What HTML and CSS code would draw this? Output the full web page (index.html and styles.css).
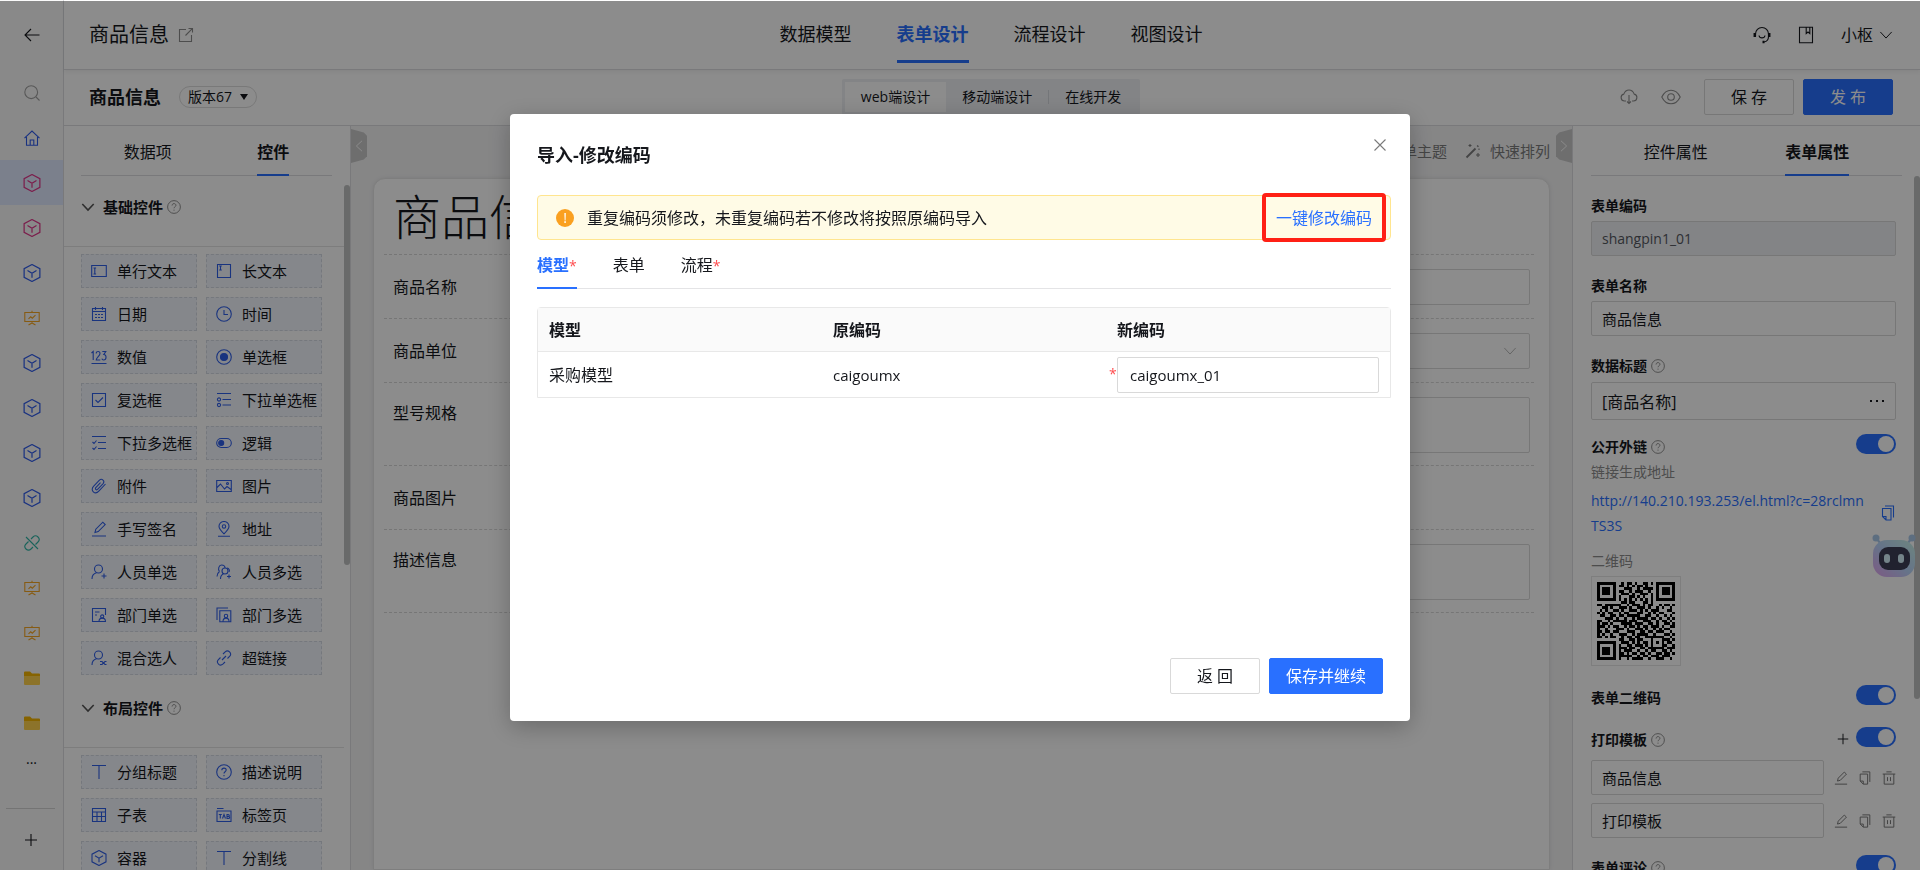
FILE: index.html
```
<!DOCTYPE html>
<html lang="zh-CN">
<head>
    <meta charset="UTF-8">
    <meta name="viewport" content="width=device-width, initial-scale=1.0">
    <title>商品信息 - 表单设计</title>
    <link rel="stylesheet" href="styles.css">
</head>
<body>
    <!-- Icon sprite -->
    <svg class="sprite" aria-hidden="true">
        <symbol id="i-back" viewBox="0 0 16 16"><path d="M15.5 8H1M7 2 1 8l6 6"/></symbol>
        <symbol id="i-search" viewBox="0 0 16 16"><circle cx="7.2" cy="7.2" r="6.4"/><path d="m12 12 3.5 3.5"/></symbol>
        <symbol id="i-home" viewBox="0 0 16 16"><path d="M.5 8.2 8 1l7.500 7.200M2.500 7v8.200h11V7M6.200 15v-5h3.600v5"/></symbol>
        <symbol id="i-cube" viewBox="0 0 16 16"><path d="M8 .5 15 4.200v7.600L8 15.500 1 11.800V4.200zM4 5.800l4 2.400 4-2.400M8 8.200v4"/></symbol>
        <symbol id="i-board" viewBox="0 0 16 16"><path d="M.8 2.500h14.400v9H.8zM8 .8v1.500M8 11.500v2M4.500 15 8 13l3.500 2M4.500 8.800l2.200-2 1.600 1.400 3.200-3"/></symbol>
        <symbol id="i-unlink" viewBox="0 0 16 16"><path d="m2 2 12 12M7 4l2-2a3.500 3.500 0 0 1 5 5l-2.500 2.500M9 12l-2 2a3.500 3.500 0 0 1-5-5l2.500-2.500"/></symbol>
        <symbol id="i-folder" viewBox="0 0 18 16"><path fill="#f5b400" stroke="none" d="M1 2.500Q1 1.500 2 1.500h5l2 2h7q1 0 1 1V8H1z"/><path fill="#ffd24d" stroke="none" d="M1 6h16v8q0 1-1 1H2q-1 0-1-1z"/></symbol>
        <symbol id="i-plus" viewBox="0 0 16 16"><path d="M8 2v12M2 8h12"/></symbol>
        <symbol id="i-share" viewBox="0 0 16 16"><path d="M8 2.500H1.500v12h12V8M10.500 1.500h4v4M14.300 1.700 7.500 8.500"/></symbol>
        <symbol id="i-down" viewBox="0 0 16 16"><path d="m1.500 4.500 6.500 7 6.500-7"/></symbol>
        <symbol id="i-left" viewBox="0 0 16 16"><path d="M11.500 2 5 8l6.500 6"/></symbol>
        <symbol id="i-right" viewBox="0 0 16 16"><path d="M4.500 2 11 8l-6.500 6"/></symbol>
        <symbol id="i-help" viewBox="0 0 16 16"><circle cx="8" cy="8" r="7.300"/><path d="M5.800 6.300c0-3 4.400-2.800 4.400-.2 0 1.600-2.200 1.700-2.200 3.300M8 11v1.200"/></symbol>
        <symbol id="i-headset" viewBox="0 0 18 18"><path d="M2.500 10V8a6.500 6.500 0 0 1 13 0v2.500c0 3-1.500 5-4.500 5.500M6 9.500c.5 3.200 5.500 3.200 6 0"/><path stroke-width="2.500" d="M1.800 7v4M16.200 7v4M9.500 16h2"/></symbol>
        <symbol id="i-book" viewBox="0 0 16 18"><path d="M1.500 1.200h13v15.600h-13zM8.200 1.500v6l1.800-1.500 1.800 1.500v-6"/></symbol>
        <symbol id="i-cloud" viewBox="0 0 18 16"><path d="M6 12H4.500a3.500 3.500 0 0 1-.7-6.900C4.800 2.500 6.800 1 9 1s4.200 1.500 5.200 4.100a3.500 3.500 0 0 1-.7 6.900H12M9 6v8.500M7 12.500l2 2 2-2"/></symbol>
        <symbol id="i-eye" viewBox="0 0 20 16"><path d="M.8 8C3 3.500 6 1.200 10 1.200S17 3.500 19.200 8C17 12.500 14 14.800 10 14.800S3 12.500.8 8z"/><circle cx="10" cy="8" r="3.300"/></symbol>
        <symbol id="i-wand" viewBox="0 0 16 16"><path stroke-width="1.800" d="m1.500 14.500 9-9M12.300 3.700l1-1"/><path d="M5 1v3M3.500 2.500h3M13 10v4M11 12h4M14 5.500v1.500"/></symbol>
        <symbol id="i-text" viewBox="0 0 16 16"><path d="M.7 2.500h14.600v11H.7zM2.500 5h2.600M2.500 11h2.600M3.800 5v6"/></symbol>
        <symbol id="i-textarea" viewBox="0 0 16 16"><path d="M1.500 1.500h13v13h-13zM3.200 3h2.600M3.200 7h2.600M4.500 3v4"/></symbol>
        <symbol id="i-date" viewBox="0 0 16 16"><path d="M1.500 2.500h13v12h-13zM1.500 5.500h13M4.500 1v3M11.500 1v3M4 8.500h2M7 8.500h2M10 8.500h2M4 11.500h2M7 11.500h2M10 11.500h2"/></symbol>
        <symbol id="i-time" viewBox="0 0 16 16"><circle cx="8" cy="8" r="7.300"/><path d="M8 4v4.500h4"/></symbol>
        <symbol id="i-number" viewBox="0 0 16 16"><path d="M.5 14.500h15M.5 4 2.200 2.500v8.500M5.200 4.500c0-2.700 3.800-2.700 3.800 0C9 6.800 5.200 9 5.200 11H9.300M11.300 2.500h3.500l-2 3c3 0 3 5.500-.2 5.500q-1.500 0-1.700-1.300"/></symbol>
        <symbol id="i-radio" viewBox="0 0 16 16"><circle cx="8" cy="8" r="7.300"/><circle cx="8" cy="8" r="3.500" fill="currentColor"/></symbol>
        <symbol id="i-check" viewBox="0 0 16 16"><path d="M1.500 1.500h13v13h-13zM4.500 8l2.500 2.500L12 5.500"/></symbol>
        <symbol id="i-select" viewBox="0 0 16 16"><path d="M1 1.500h14M6.500 7.500H15M6.500 13H15"/><circle cx="3" cy="7.500" r="1.600"/><circle cx="3" cy="13" r="1.600"/></symbol>
        <symbol id="i-multi" viewBox="0 0 16 16"><path d="M1 1.500h14M7 7.500h8M7 13.500h8M1.500 7l1.500 1.500 2.500-3M1.500 13 3 14.500l2.500-3"/></symbol>
        <symbol id="i-switch" viewBox="0 0 16 16"><rect x=".7" y="3.500" width="14.600" height="9" rx="4.500"/><circle cx="5.200" cy="8" r="2.500" fill="currentColor"/></symbol>
        <symbol id="i-clip" viewBox="0 0 16 16"><path d="m14.500 6-6.700 7.200c-3.800 4-9-.8-5.300-4.800l5.700-6c2.700-2.700 6.200.6 3.700 3.400L6.800 11.200c-1.400 1.500-3.200-.3-2-1.600l4.700-5"/></symbol>
        <symbol id="i-image" viewBox="0 0 16 16"><path d="M.7 2.500h14.600v11H.7zM1 9.500l3.500-3.500 4 5 2.500-2.500 4 3"/><circle cx="11.500" cy="5.500" r="1"/></symbol>
        <symbol id="i-pen" viewBox="0 0 16 16"><path d="M1 15h14M4 11.500l.8-3.300L11.800 1.200l2.400 2.400-7 7z"/></symbol>
        <symbol id="i-pin" viewBox="0 0 16 16"><path d="M8 12.800C4.800 9.800 3 7.500 3 5.300a5 4.800 0 0 1 10 0c0 2.200-1.800 4.500-5 7.500zM2 15.300h12"/><circle cx="8" cy="5.500" r="1.700"/></symbol>
        <symbol id="i-user" viewBox="0 0 16 16"><circle cx="7.500" cy="5" r="4"/><path d="M1 15c0-3.500 2-5.500 4.500-6.200M13 9.500v5M10.500 12h5"/></symbol>
        <symbol id="i-users" viewBox="0 0 16 16"><path d="M3.500 7.500C1.500 5 3 1 5.500 1S9 2.500 9 4M1 12.500c0-2.500 1-4 2.500-5"/><circle cx="9" cy="7" r="3"/><path d="M4.500 15c0-2.500 1-4.300 3-5.200M13 10.500v4M11 12.500h4M11 4c2 .3 3 2.200 2 4"/></symbol>
        <symbol id="i-dept" viewBox="0 0 16 16"><path d="M14.500 8V1.500h-13v13h6M4 5h4.500M4 8h2M8 14.500c0-4.500 6.500-4.500 6.500 0z"/><circle cx="11.200" cy="9.500" r="1.600"/></symbol>
        <symbol id="i-depts" viewBox="0 0 16 16"><path d="M1 13V1h11M3.800 3.800h11v11h-11zM7 14.500c0-4.500 6-4.500 6 0"/><circle cx="10" cy="9" r="1.700"/></symbol>
        <symbol id="i-mix" viewBox="0 0 16 16"><circle cx="7.500" cy="5" r="4"/><path d="M1 15c0-3.500 2-5.500 4.500-6.200M9 11.500h2l3 3h1.500M9 14.500h2l3-3h1.500"/></symbol>
        <symbol id="i-link" viewBox="0 0 16 16"><path d="m7 4 2.200-2.200c3-2.600 7 1.600 4.600 4.400L11.500 8.500M9 12l-2.200 2.200c-3 2.600-7-1.600-4.600-4.400L4.500 7.500M6 10l4-4"/></symbol>
        <symbol id="i-title" viewBox="0 0 16 16"><path d="M1 1.500h14M8 1.500V15"/></symbol>
        <symbol id="i-table" viewBox="0 0 16 16"><path d="M1.500 1.500h13v13h-13zM1.500 5h13M1.500 9.500h13M6 5v9.500M10.500 5v9.500"/></symbol>
        <symbol id="i-tab" viewBox="0 0 16 16"><path d="M1 1.500h6.500M1 4h14v10.500H1zM2.800 7.500h3M4.300 7.500v4M6.500 11.500 8 7.500l1.500 4M11 7.500v4h1.500c1.500 0 1.500-2 0-2H11h1.300c1.300 0 1.300-2 0-2z"/></symbol>
        <symbol id="i-copy" viewBox="0 0 16 16"><path d="M2.500 3.500h8.500v11.500H6L2.500 11.500zM2.500 11.500H6V15M5 1h8.500v11.500"/></symbol>
        <symbol id="i-trash" viewBox="0 0 16 16"><path d="M.8 3.500h14.400M5 1h6M2.500 3.500V15h11V3.500M6.300 7v4.500M9.700 7v4.500"/></symbol>
        <symbol id="i-close" viewBox="0 0 16 16"><path d="m2.500 2.500 11 11M13.500 2.500l-11 11"/></symbol>
    </svg>

    <div class="app">
        <nav class="sidebar">
            <a class="side-back" href="#" aria-label="返回"><svg class="icon"><use href="#i-back"/></svg></a>
            <a class="side-item muted" href="#" aria-label="搜索"><svg class="icon"><use href="#i-search"/></svg></a>
            <a class="side-item blue" href="#" aria-label="首页"><svg class="icon"><use href="#i-home"/></svg></a>
            <a class="side-item pink active" href="#" aria-label="表单"><svg class="icon icon-18"><use href="#i-cube"/></svg></a>
            <a class="side-item pink" href="#" aria-label="表单"><svg class="icon icon-18"><use href="#i-cube"/></svg></a>
            <a class="side-item blue" href="#" aria-label="表单"><svg class="icon icon-18"><use href="#i-cube"/></svg></a>
            <a class="side-item orange" href="#" aria-label="看板"><svg class="icon"><use href="#i-board"/></svg></a>
            <a class="side-item blue" href="#" aria-label="表单"><svg class="icon icon-18"><use href="#i-cube"/></svg></a>
            <a class="side-item blue" href="#" aria-label="表单"><svg class="icon icon-18"><use href="#i-cube"/></svg></a>
            <a class="side-item blue" href="#" aria-label="表单"><svg class="icon icon-18"><use href="#i-cube"/></svg></a>
            <a class="side-item blue" href="#" aria-label="表单"><svg class="icon icon-18"><use href="#i-cube"/></svg></a>
            <a class="side-item teal" href="#" aria-label="链接"><svg class="icon"><use href="#i-unlink"/></svg></a>
            <a class="side-item orange" href="#" aria-label="看板"><svg class="icon"><use href="#i-board"/></svg></a>
            <a class="side-item orange" href="#" aria-label="看板"><svg class="icon"><use href="#i-board"/></svg></a>
            <a class="side-item" href="#" aria-label="文件夹"><svg class="icon icon-18"><use href="#i-folder"/></svg></a>
            <a class="side-item" href="#" aria-label="文件夹"><svg class="icon icon-18"><use href="#i-folder"/></svg></a>
            <button class="side-more" type="button">···</button>
            <button class="side-add" type="button" aria-label="新增"><svg class="icon"><use href="#i-plus"/></svg></button>
        </nav>

        <div class="main">
            <header class="topbar">
                <div class="topbar-title">商品信息 <svg class="icon gray"><use href="#i-share"/></svg></div>
                <nav class="topnav">
                    <a href="#">数据模型</a>
                    <a class="active" href="#">表单设计</a>
                    <a href="#">流程设计</a>
                    <a href="#">视图设计</a>
                </nav>
                <div class="topbar-right">
                    <svg class="icon icon-18"><use href="#i-headset"/></svg>
                    <svg class="icon icon-18"><use href="#i-book"/></svg>
                    <button class="user" type="button">小枢 <svg class="icon icon-14"><use href="#i-down"/></svg></button>
                </div>
            </header>

            <div class="subbar">
                <div class="subbar-left">
                    <h1>商品信息</h1>
                    <button class="version" type="button">版本67 <span class="caret"></span></button>
                </div>
                <div class="segment">
                    <button class="active" type="button">web端设计</button>
                    <button type="button">移动端设计</button>
                    <button class="divided" type="button">在线开发</button>
                </div>
                <div class="subbar-right">
                    <svg class="icon icon-18 gray"><use href="#i-cloud"/></svg>
                    <svg class="icon icon-20 gray"><use href="#i-eye"/></svg>
                    <button class="btn" type="button">保 存</button>
                    <button class="btn primary" type="button">发 布</button>
                </div>
            </div>

            <div class="workspace">
                <aside class="widgets">
                    <div class="panel-tabs">
                        <a href="#">数据项</a>
                        <a class="active" href="#">控件</a>
                    </div>
                    <div class="scroll-thumb left-thumb"></div>
                    <h2 class="group-title"><svg class="icon icon-14"><use href="#i-down"/></svg>基础控件<svg class="icon icon-14 gray help"><use href="#i-help"/></svg></h2>
                    <div class="widget-grid">
                        <button type="button"><svg class="icon"><use href="#i-text"/></svg>单行文本</button>
                        <button type="button"><svg class="icon"><use href="#i-textarea"/></svg>长文本</button>
                        <button type="button"><svg class="icon"><use href="#i-date"/></svg>日期</button>
                        <button type="button"><svg class="icon"><use href="#i-time"/></svg>时间</button>
                        <button type="button"><svg class="icon"><use href="#i-number"/></svg>数值</button>
                        <button type="button"><svg class="icon"><use href="#i-radio"/></svg>单选框</button>
                        <button type="button"><svg class="icon"><use href="#i-check"/></svg>复选框</button>
                        <button type="button"><svg class="icon"><use href="#i-select"/></svg>下拉单选框</button>
                        <button type="button"><svg class="icon"><use href="#i-multi"/></svg>下拉多选框</button>
                        <button type="button"><svg class="icon"><use href="#i-switch"/></svg>逻辑</button>
                        <button type="button"><svg class="icon"><use href="#i-clip"/></svg>附件</button>
                        <button type="button"><svg class="icon"><use href="#i-image"/></svg>图片</button>
                        <button type="button"><svg class="icon"><use href="#i-pen"/></svg>手写签名</button>
                        <button type="button"><svg class="icon"><use href="#i-pin"/></svg>地址</button>
                        <button type="button"><svg class="icon"><use href="#i-user"/></svg>人员单选</button>
                        <button type="button"><svg class="icon"><use href="#i-users"/></svg>人员多选</button>
                        <button type="button"><svg class="icon"><use href="#i-dept"/></svg>部门单选</button>
                        <button type="button"><svg class="icon"><use href="#i-depts"/></svg>部门多选</button>
                        <button type="button"><svg class="icon"><use href="#i-mix"/></svg>混合选人</button>
                        <button type="button"><svg class="icon"><use href="#i-link"/></svg>超链接</button>
                    </div>
                    <h2 class="group-title"><svg class="icon icon-14"><use href="#i-down"/></svg>布局控件<svg class="icon icon-14 gray help"><use href="#i-help"/></svg></h2>
                    <div class="widget-grid">
                        <button type="button"><svg class="icon"><use href="#i-title"/></svg>分组标题</button>
                        <button type="button"><svg class="icon"><use href="#i-help"/></svg>描述说明</button>
                        <button type="button"><svg class="icon"><use href="#i-table"/></svg>子表</button>
                        <button type="button"><svg class="icon"><use href="#i-tab"/></svg>标签页</button>
                        <button type="button"><svg class="icon"><use href="#i-cube"/></svg>容器</button>
                        <button type="button"><svg class="icon"><use href="#i-title"/></svg>分割线</button>
                    </div>
                </aside>

                <main class="canvas">
                    <button class="fold fold-left" type="button" aria-label="收起"><svg class="icon icon-14"><use href="#i-left"/></svg></button>
                    <button class="fold fold-right" type="button" aria-label="收起"><svg class="icon icon-14"><use href="#i-right"/></svg></button>
                    <div class="canvas-tools">
                        <span>表单主题</span>
                        <span><svg class="icon"><use href="#i-wand"/></svg>快速排列</span>
                    </div>
                    <div class="form-card">
                        <div class="form-title">商品信息</div>
                        <div class="form-row"><label for="f-name">商品名称</label><input id="f-name" type="text"></div>
                        <div class="form-row">
                            <label for="f-unit">商品单位</label>
                            <select id="f-unit"><option></option></select>
                            <svg class="icon icon-14 select-arrow"><use href="#i-down"/></svg>
                        </div>
                        <div class="form-row tall"><label for="f-spec">型号规格</label><textarea id="f-spec"></textarea></div>
                        <div class="form-row"><span class="row-label">商品图片</span></div>
                        <div class="form-row tall"><label for="f-desc">描述信息</label><textarea id="f-desc"></textarea></div>
                    </div>
                </main>

                <aside class="props">
                    <div class="panel-tabs">
                        <a href="#">控件属性</a>
                        <a class="active" href="#">表单属性</a>
                    </div>
                    <div class="scroll-thumb right-thumb"></div>
                    <div class="field">
                        <label for="p-code">表单编码</label>
                        <input id="p-code" type="text" value="shangpin1_01" disabled>
                    </div>
                    <div class="field">
                        <label for="p-name">表单名称</label>
                        <input id="p-name" type="text" value="商品信息">
                    </div>
                    <div class="field">
                        <label for="p-title">数据标题<svg class="icon icon-14 gray help"><use href="#i-help"/></svg></label>
                        <div class="pick">
                            <input id="p-title" type="text" value="[商品名称]">
                            <button type="button" aria-label="选择">
                                <svg class="icon" viewBox="0 0 16 16"><path stroke-width="2" d="M1 8h2M7 8h2M13 8h2"/></svg>
                            </button>
                        </div>
                    </div>
                    <div class="switch-row link-switch">
                        <label for="s-link">公开外链<svg class="icon icon-14 gray help"><use href="#i-help"/></svg></label>
                        <input id="s-link" class="switch" type="checkbox" role="switch" checked>
                    </div>
                    <p class="hint">链接生成地址</p>
                    <div class="link-row">
                        <a href="#">http://140.210.193.253/el.html?c=28rclmn<br>TS3S</a>
                        <svg class="icon"><use href="#i-copy"/></svg>
                    </div>
                    <p class="hint qr-hint">二维码</p>
                    <div class="qr"><svg id="qr" viewBox="0 0 29 29" shape-rendering="crispEdges"></svg></div>
                    <div class="switch-row">
                        <label for="s-qr">表单二维码</label>
                        <input id="s-qr" class="switch" type="checkbox" role="switch" checked>
                    </div>
                    <div class="switch-row print-switch">
                        <label for="s-print">打印模板<svg class="icon icon-14 gray help"><use href="#i-help"/></svg></label>
                        <button type="button" aria-label="新增模板"><svg class="icon icon-14"><use href="#i-plus"/></svg></button>
                        <input id="s-print" class="switch" type="checkbox" role="switch" checked>
                    </div>
                    <div class="tpl-row">
                        <input type="text" value="商品信息" aria-label="模板名称">
                        <svg class="icon icon-14"><use href="#i-pen"/></svg>
                        <svg class="icon icon-14"><use href="#i-copy"/></svg>
                        <svg class="icon icon-14"><use href="#i-trash"/></svg>
                    </div>
                    <div class="tpl-row">
                        <input type="text" value="打印模板" aria-label="模板名称">
                        <svg class="icon icon-14"><use href="#i-pen"/></svg>
                        <svg class="icon icon-14"><use href="#i-copy"/></svg>
                        <svg class="icon icon-14"><use href="#i-trash"/></svg>
                    </div>
                    <div class="switch-row">
                        <label for="s-comment">表单评论<svg class="icon icon-14 gray help"><use href="#i-help"/></svg></label>
                        <input id="s-comment" class="switch" type="checkbox" role="switch" checked>
                    </div>
                </aside>
            </div>
        </div>
    </div>

    <!-- Assistant robot -->
    <svg class="robot" viewBox="0 0 44 46">
        <defs>
            <linearGradient id="shell" x1="0" y1="1" x2="1" y2="0">
                <stop offset="0" stop-color="#e4a3f0"/>
                <stop offset=".5" stop-color="#b9d4fa"/>
                <stop offset="1" stop-color="#c9f3e6"/>
            </linearGradient>
        </defs>
        <path d="m4 4 5 6M40 4l-5 6" stroke="#a9c8ea" stroke-width="2"/>
        <circle cx="4" cy="4" r="3.500" fill="#a9c8ea"/>
        <circle cx="40" cy="4" r="3.500" fill="#a9c8ea"/>
        <rect x="1" y="6" width="42" height="37" rx="14" fill="url(#shell)"/>
        <rect x="7" y="13" width="31" height="23" rx="9" fill="#3d3f57"/>
        <rect x="12" y="20" width="6" height="9" rx="3" fill="#d3f1fa"/>
        <rect x="26" y="20" width="6" height="9" rx="3" fill="#d3f1fa"/>
    </svg>

    <div class="mask">
        <div class="modal" role="dialog" aria-labelledby="modal-title">
            <header class="modal-head">
                <h2 id="modal-title">导入-修改编码</h2>
                <button type="button" aria-label="关闭"><svg class="icon"><use href="#i-close"/></svg></button>
            </header>
            <div class="modal-body">
                <div class="alert">
                    <span class="alert-icon">!</span>
                    <span class="alert-text">重复编码须修改，未重复编码若不修改将按照原编码导入</span>
                    <button class="fix-all" type="button">一键修改编码</button>
                </div>
                <div class="modal-tabs">
                    <a class="active" href="#">模型<em>*</em></a>
                    <a href="#">表单</a>
                    <a href="#">流程<em>*</em></a>
                </div>
                <table class="code-table">
                    <thead>
                        <tr><th>模型</th><th>原编码</th><th>新编码</th></tr>
                    </thead>
                    <tbody>
                        <tr>
                            <td>采购模型</td>
                            <td class="code">caigoumx</td>
                            <td class="code edit"><em>*</em><input type="text" value="caigoumx_01" aria-label="新编码"></td>
                        </tr>
                    </tbody>
                </table>
            </div>
            <footer class="modal-foot">
                <button class="btn" type="button">返 回</button>
                <button class="btn primary" type="button">保存并继续</button>
            </footer>
        </div>
    </div>

    <script src="script.js"></script>
</body>
</html>
```
FILE: styles.css
```
* {
    box-sizing: border-box;
}

body {
    margin: 0;
    height: 100vh;
    overflow: hidden;
    font-family: "Open Sans", "Noto Sans CJK SC", sans-serif;
    font-size: 16px;
    line-height: 24px;
    color: #15171c;
    background: #fff;
}

a {
    color: inherit;
    text-decoration: none;
}

h1, h2, p {
    margin: 0;
}

em {
    font-style: normal;
    font-size: 14px;
    color: #ff4d4f;
}

button, input, select, textarea {
    font: inherit;
    color: inherit;
}

button {
    padding: 0;
    border: 0;
    background: none;
    cursor: pointer;
}

input[type="text"], select, textarea {
    display: block;
    width: 100%;
    padding: 0 10px;
    border: 1px solid #d9d9d9;
    border-radius: 2px;
    background: #fff;
    outline: none;
    appearance: none;
    resize: none;
}

.sprite {
    position: absolute;
    width: 0;
    height: 0;
}

.icon {
    flex: none;
    width: 16px;
    height: 16px;
    fill: none;
    stroke: currentColor;
    stroke-width: 1.1;
}

.icon-14 {
    width: 14px;
    height: 14px;
}

.icon-18 {
    width: 18px;
    height: 18px;
}

.icon-20 {
    width: 20px;
    height: 18px;
}

.gray {
    color: #8c8c8c;
}

.help {
    margin-left: 4px;
}

.app {
    display: flex;
    height: 100vh;
}

/* Sidebar */
.sidebar {
    display: flex;
    flex-direction: column;
    align-items: stretch;
    width: 64px;
    border-right: 1px solid #dcdde0;
    background: #fafafa;
}

.side-back, .side-item, .side-more, .side-add {
    display: flex;
    justify-content: center;
    align-items: center;
    height: 45px;
}

.side-back {
    height: 70px;
}

.side-item.active {
    background: #e0eaff;
}

.side-more {
    height: 36px;
    font-size: 14px;
}

.side-add {
    height: 62px;
    margin: auto 8px 0 6px;
    border-top: 1px solid #d4d4d4;
}

.muted { color: #a0a0a0; }
.blue { color: #2f5bea; }
.pink { color: #e0358a; }
.orange { color: #f5a623; }
.teal { color: #2fb5a5; }

/* Header rows */
.main {
    flex: 1;
    display: flex;
    flex-direction: column;
    min-width: 0;
}

.topbar, .subbar {
    flex: none;
    display: grid;
    grid-template-columns: 1fr auto 1fr;
    align-items: center;
    padding: 0 27px 0 25px;
    border-bottom: 1px solid #dcdde0;
}

.topbar {
    height: 70px;
    box-shadow: 0 2px 4px rgba(0, 0, 0, 0.06);
}

.subbar {
    height: 56px;
    padding-bottom: 2px;
}

.topbar-title {
    display: flex;
    align-items: center;
    gap: 9px;
    font-size: 20px;
}

.topnav {
    display: flex;
    gap: 45px;
    font-size: 18px;
}

.topnav a {
    padding: 16px 0 14px;
    border-bottom: 3px solid transparent;
}

.topnav .active {
    border-bottom-color: #2970ff;
    font-weight: bold;
    color: #2970ff;
}

.topbar-right, .subbar-right {
    display: flex;
    justify-content: flex-end;
    align-items: center;
}

.topbar-right {
    gap: 26px;
}

.user {
    display: flex;
    align-items: center;
    gap: 6px;
}

.subbar-left {
    display: flex;
    align-items: center;
    gap: 18px;
}

.subbar-left h1 {
    font-size: 18px;
}

.version {
    display: flex;
    align-items: center;
    gap: 8px;
    height: 22px;
    padding: 0 8px;
    border: 1px solid #dcdcdc;
    border-radius: 11px;
    font-size: 14px;
}

.caret {
    border: 4px solid transparent;
    border-top: 6px solid #15171c;
    border-bottom: 0;
}

.segment {
    display: flex;
    align-items: center;
    height: 36px;
    padding: 3px;
    border-radius: 2px;
    background: #eef0f4;
    font-size: 14px;
}

.segment button {
    height: 30px;
    padding: 0 16px;
}

.segment .active {
    background: #fff;
}

.segment .divided {
    height: 14px;
    border-left: 1px solid #d4d7dd;
    line-height: 14px;
}

.subbar-right {
    gap: 9px;
}

.subbar-right .icon {
    margin-right: 14px;
}

.btn {
    min-width: 90px;
    height: 36px;
    padding: 0 16px;
    border: 1px solid #d9d9d9;
    border-radius: 2px;
    background: #fff;
}

.btn.primary {
    border-color: #2970ff;
    background: #2970ff;
    color: #fff;
}

/* Three column workspace */
.workspace {
    flex: 1;
    display: flex;
    min-height: 0;
}

.widgets, .props {
    position: relative;
    flex: none;
    overflow: hidden;
}

.widgets {
    width: 287px;
    border-right: 1px solid #dcdde0;
}

.panel-tabs {
    display: flex;
    justify-content: space-around;
    height: 50px;
    margin: 0 18px 0 17px;
    border-bottom: 1px solid #dcdde0;
}

.panel-tabs a {
    height: 50px;
    padding-top: 14px;
}

.panel-tabs .active {
    border-bottom: 2px solid #2970ff;
    font-weight: bold;
}

.scroll-thumb {
    position: absolute;
    right: 0;
    width: 6px;
    border-radius: 3px;
    background: #c0c2c2;
}

.left-thumb {
    top: 59px;
    height: 380px;
}

.right-thumb {
    top: 50px;
    height: 523px;
}

.group-title {
    display: flex;
    align-items: center;
    height: 71px;
    margin-right: 6px;
    padding: 0 17px 8px;
    border-bottom: 1px solid #e4e4e4;
    font-size: 15px;
}

.group-title .icon:first-child {
    margin-right: 8px;
    color: #555;
    stroke-width: 1.8;
}

.widget-grid {
    display: grid;
    grid-template-columns: 1fr 1fr;
    gap: 9px;
    padding: 7px 28px 2px 17px;
}

.widget-grid button {
    display: flex;
    align-items: center;
    gap: 10px;
    height: 34px;
    padding-left: 9px;
    border: 1px dashed #d6dae3;
    background: #f3f6fd;
    font-size: 15px;
    white-space: nowrap;
}

.widget-grid .icon {
    color: #2f5fe8;
}

.canvas {
    position: relative;
    flex: 1;
    display: flex;
    flex-direction: column;
    min-width: 0;
    padding: 0 22px;
    background: #f4f4f5;
}

.canvas-tools {
    display: flex;
    justify-content: flex-end;
    gap: 18px;
    height: 52px;
    padding-top: 13px;
    font-size: 15px;
    color: #7d7d7d;
}

.canvas-tools span {
    display: flex;
    align-items: center;
    gap: 9px;
    height: 24px;
}

.fold {
    position: absolute;
    top: 3px;
    width: 16px;
    height: 34px;
    background: #c8c8c8;
    color: #fff;
}

.fold .icon {
    display: block;
    margin: auto;
}

.fold-left {
    left: 0;
    clip-path: polygon(0 0, 80% 10%, 100% 20%, 100% 80%, 80% 90%, 0 100%);
}

.fold-right {
    right: 0;
    clip-path: polygon(100% 0, 20% 10%, 0 20%, 0 80%, 20% 90%, 100% 100%);
}

.form-card {
    flex: 1;
    padding: 0 15px 0 10px;
    border: 1px solid #e6e6e6;
    border-radius: 12px 12px 0 0;
    background: #fff;
    box-shadow: 0 0 4px rgba(0, 0, 0, 0.08);
}

.form-title {
    height: 76px;
    padding-left: 9px;
    border-bottom: 1px dashed #d8d8d8;
    font-size: 48px;
    font-weight: 300;
    line-height: 76px;
}

.form-row {
    position: relative;
    display: flex;
    align-items: center;
    height: 64px;
    padding: 0 4px 0 9px;
    border-bottom: 1px dashed #d8d8d8;
}

.form-row label {
    width: 130px;
}

.form-row input, .form-row select {
    flex: 1;
    width: auto;
    height: 36px;
}

.form-row.tall {
    align-items: flex-start;
    height: 83px;
    padding-top: 14px;
}

.tall label {
    padding-top: 4px;
}

.form-row textarea {
    flex: 1;
    width: auto;
    height: 56px;
}

.select-arrow {
    position: absolute;
    right: 17px;
    color: #b5b5b5;
}

/* Form properties */
.props {
    width: 348px;
    padding-right: 24px;
    border-left: 1px solid #dcdde0;
    font-size: 14px;
}

.props .panel-tabs {
    margin: 0 -6px 0 18px;
    padding: 0 14px;
    font-size: 16px;
}

.field, .switch-row, .hint, .link-row, .qr, .tpl-row {
    margin-left: 18px;
}

.field {
    margin-top: 18px;
}

.field label, .switch-row label {
    display: flex;
    align-items: center;
    font-weight: bold;
}

.field input {
    height: 35px;
    margin-top: 3px;
    font-size: 15px;
}

.field input:disabled {
    background: #eef0f4;
    font-size: 14px;
    color: #55585f;
}

.pick {
    display: flex;
    margin-top: 4px;
    padding-right: 10px;
    border: 1px solid #d9d9d9;
    border-radius: 2px;
}

.pick input[type="text"] {
    height: 36px;
    margin: 0;
    border: 0;
    font-size: 16px;
}

.pick button {
    display: flex;
    align-items: center;
}

.switch-row {
    display: flex;
    align-items: center;
    height: 42px;
}

.switch-row label {
    flex: 1;
    padding-top: 2px;
}

.link-switch {
    height: 28px;
    margin-top: 12px;
}

.switch {
    position: relative;
    width: 40px;
    height: 20px;
    margin: 0 0 4px;
    border-radius: 10px;
    background: #2970ff;
    appearance: none;
}

.switch::before {
    content: "";
    position: absolute;
    top: 2px;
    right: 2px;
    width: 16px;
    height: 16px;
    border-radius: 50%;
    background: #fff;
}

.hint {
    color: #8c8c8c;
}

.link-row {
    display: flex;
    align-items: center;
    justify-content: space-between;
    margin-top: 3px;
    padding: 1px 0;
    line-height: 25px;
    color: #2970ff;
}

.qr-hint {
    margin-top: 10px;
}

.qr {
    width: 90px;
    height: 90px;
    margin-top: 3px;
    margin-bottom: 10px;
    padding: 5px;
    border: 1px solid #e6e6e6;
}

.qr svg {
    display: block;
    width: 78px;
    height: 78px;
}

.print-switch button {
    display: flex;
    margin-right: 6px;
}

.tpl-row {
    display: flex;
    align-items: center;
    gap: 10px;
    margin-bottom: 8px;
    color: #777;
}

.tpl-row input[type="text"] {
    flex: 1;
    height: 35px;
    min-width: 0;
    font-size: 15px;
    color: #15171c;
}

.robot {
    position: fixed;
    right: 4px;
    top: 534px;
    width: 44px;
    height: 46px;
}

/* Import dialog */
.mask {
    position: fixed;
    inset: 1px 0 0;
    display: flex;
    justify-content: center;
    align-items: flex-start;
    padding-top: 113px;
    background: rgba(0, 0, 0, 0.45);
}

.modal {
    width: 900px;
    border-radius: 4px;
    background: #fff;
    box-shadow: 0 6px 24px rgba(0, 0, 0, 0.25);
}

.modal-head {
    display: flex;
    justify-content: space-between;
    height: 81px;
    padding: 23px 22px 0 27px;
}

.modal-head h2 {
    padding-top: 6px;
    font-size: 18px;
}

.modal-head button {
    height: 16px;
    line-height: 0;
    color: #7a7a7a;
}

.modal-body {
    min-height: 463px;
    padding: 0 19px 0 27px;
}

.alert {
    display: flex;
    align-items: center;
    height: 45px;
    padding: 0 4px 0 18px;
    border: 1px solid #ffe58f;
    border-radius: 4px;
    background: #fffbe6;
}

.alert-icon {
    width: 18px;
    height: 18px;
    margin-right: 13px;
    border-radius: 50%;
    background: #faa020;
    color: #fff;
    font-size: 14px;
    line-height: 18px;
    text-align: center;
}

.alert-text {
    flex: 1;
}

.fix-all {
    height: 49px;
    padding: 0 10px;
    border: 4px solid #ff2015;
    border-radius: 4px;
    color: #2970ff;
}

.modal-tabs {
    display: flex;
    gap: 36px;
    height: 49px;
    border-bottom: 1px solid #e4e4e6;
}

.modal-tabs a {
    height: 49px;
    padding-top: 13px;
}

.modal-tabs .active {
    border-bottom: 2px solid #2970ff;
    font-weight: bold;
    color: #2970ff;
}

.modal-tabs em {
    font-weight: normal;
}

.code-table {
    width: 100%;
    margin-top: 18px;
    border: 1px solid #e8e8e8;
    border-radius: 4px 4px 0 0;
    border-spacing: 0;
    table-layout: fixed;
}

.code-table th, .code-table td {
    height: 45px;
    padding: 0 11px;
    text-align: left;
}

.code-table th {
    height: 44px;
    border-bottom: 1px solid #e8e8e8;
    background: #fafafa;
}

.code-table .code {
    font-size: 15px;
}

.code-table .edit {
    position: relative;
}

.edit em {
    position: absolute;
    left: 3px;
    top: 10px;
}

.edit input[type="text"] {
    height: 36px;
    padding: 0 12px;
}

.modal-foot {
    display: flex;
    justify-content: flex-end;
    gap: 9px;
    padding: 0 27px 27px;
}
```
FILE: script.js
```
// Rows of the QR code, 1 = dark module
const QR_ROWS = [
    '11111110010110100110101111111',
    '10000010110101011010001000001',
    '10111010001110010111101011101',
    '10111010110010111001001011101',
    '10111010011101001110101011101',
    '10000010100011010100101000001',
    '11111110101010101010101111111',
    '00000000011011000110100000000',
    '11011111100101110101100101101',
    '00110100111010011101001010010',
    '01010011010011101010111000110',
    '10101100101100011001010110001',
    '01100110110111110011001001010',
    '00011101001001011110110100101',
    '11001011111011100111001011010',
    '10110100011110111001101001101',
    '11101011001011010110111010011',
    '10010001110100111010010101100',
    '11011011000111001101101110010',
    '10100100111001011110010001101',
    '11010110010110110011111110010',
    '00000000110011011000100011101',
    '11111110011101010110101010110',
    '10000010100110111010100011001',
    '10111010111011001101111110111',
    '10111010101110010010110011010',
    '10111010110101101101001101101',
    '10000010111110010110111011100',
    '11111110100101111001001110010'
];

let path = '';
QR_ROWS.forEach((row, y) => {
    [...row].forEach((bit, x) => {
        if (bit === '1') path += `M${x} ${y}h1v1h-1z`;
    });
});
document.getElementById('qr').innerHTML = `<path d="${path}"/>`;
```
